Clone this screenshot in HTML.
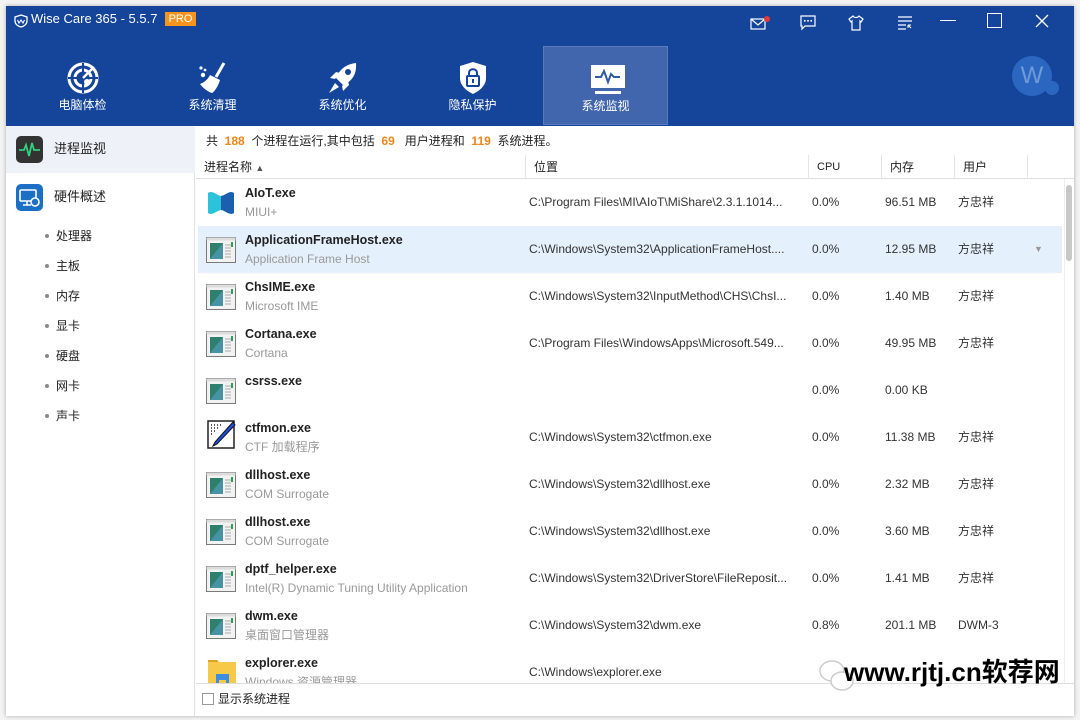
<!DOCTYPE html>
<html><head><meta charset="utf-8"><style>
*{margin:0;padding:0;box-sizing:border-box}
body{width:1080px;height:720px;background:#f3f3f3;position:relative;overflow:hidden;font-family:"Liberation Sans","Noto Sans CJK SC",sans-serif;font-size:12px;line-height:16px;color:#222}
.a{position:absolute;white-space:nowrap}
#win{position:absolute;left:6px;top:6px;width:1068px;height:710px;background:#fff;box-shadow:0 0 4px rgba(0,0,0,.3)}
#hdr{position:absolute;left:0;top:0;width:1068px;height:120px;background:#15449b;color:#fff}
.tab{position:absolute;top:40px;width:125px;height:79px;text-align:center}
.tab .lbl{position:absolute;left:0;right:0;top:51px;font-size:12px}
.tab svg{position:absolute;left:46px;top:15px}
.row{position:absolute;left:192px;width:864px;height:47px}
.row .n{position:absolute;left:47px;top:6px;font-weight:bold;font-size:12.5px;color:#222}
.row .d{position:absolute;left:47px;top:25px;font-size:12px;color:#999}
.row .p{position:absolute;left:331px;top:15px;font-size:12px;color:#333}
.row .c{position:absolute;left:614px;top:15px;color:#333}
.row .m{position:absolute;left:687px;top:15px;color:#333}
.row .u{position:absolute;left:760px;top:15px;color:#333}
.row .ic{position:absolute;left:9px;top:11px}
.sub{position:absolute;left:50px;font-size:12px;color:#222}
.sub:before{content:"";position:absolute;left:-11px;top:6px;width:4px;height:4px;border-radius:50%;background:#888}
</style></head><body>
<div id="win">
<div id="hdr">
 <svg class="a" style="left:8px;top:8px" width="14" height="14" viewBox="0 0 14 14"><path d="M7 1 L13 3 V7 C13 10 10 12.5 7 13 C4 12.5 1 10 1 7 V3Z" fill="none" stroke="#fff" stroke-width="1.3"/><path d="M3.5 6 L5 9 L7 6 L9 9 L10.5 6" fill="none" stroke="#fff" stroke-width="1.1"/></svg>
 <div class="a" style="left:25px;top:5px;font-size:13px">Wise Care 365 - 5.5.7</div>
 <div class="a" style="left:159px;top:6px;width:31px;height:14px;background:#f7941d;font-size:11px;text-align:center;line-height:14px">PRO</div>
 <svg class="a" style="left:744px;top:8px" width="22" height="18"><rect x="1" y="5" width="14" height="10" fill="none" stroke="#fff" stroke-width="1.2"/><path d="M1 5 L8 11 L15 5" fill="none" stroke="#fff" stroke-width="1.2"/><circle cx="17" cy="5" r="3" fill="#e23a3a"/></svg>
 <svg class="a" style="left:793px;top:8px" width="18" height="18"><path d="M2 2 H16 V12 H6 L3 15 V12 H2Z" fill="none" stroke="#fff" stroke-width="1.2"/><rect x="5" y="6" width="1.6" height="1.6" fill="#fff"/><rect x="8.2" y="6" width="1.6" height="1.6" fill="#fff"/><rect x="11.4" y="6" width="1.6" height="1.6" fill="#fff"/></svg>
 <svg class="a" style="left:841px;top:8px" width="18" height="18"><path d="M6 2 L2 5 L4 8 L5 7 V16 H13 V7 L14 8 L16 5 L12 2 C11 4 7 4 6 2Z" fill="none" stroke="#fff" stroke-width="1.2"/></svg>
 <svg class="a" style="left:890px;top:8px" width="18" height="18"><path d="M2 3H16M2 7H16M2 11H10M2 15H10" stroke="#fff" stroke-width="1.2"/><path d="M12 11 L15 14 M12 11 V14 M12 11 H15" stroke="#fff" stroke-width="1"/></svg>
 <div class="a" style="left:934px;top:14px;width:16px;height:1px;background:#fff"></div>
 <div class="a" style="left:981px;top:7px;width:15px;height:15px;border:1.3px solid #fff"></div>
 <svg class="a" style="left:1028px;top:7px" width="16" height="16"><path d="M2 2L14 14M14 2L2 14" stroke="#fff" stroke-width="1.3"/></svg>
 <div class="tab" style="left:14px"><svg width="34" height="34" viewBox="0 0 34 34"><circle cx="17" cy="17" r="14" fill="none" stroke="#fff" stroke-width="3"/><circle cx="17" cy="17" r="8" fill="none" stroke="#fff" stroke-width="3"/><path d="M17 2V32M2 17H32" stroke="#15449b" stroke-width="2"/><path d="M17 17 L28 6" stroke="#fff" stroke-width="2.5"/><circle cx="21" cy="21" r="3" fill="#fff"/></svg><div class="lbl">电脑体检</div></div>
 <div class="tab" style="left:144px"><svg width="34" height="34" viewBox="0 0 34 34"><path d="M28 2 L20 16" stroke="#fff" stroke-width="3"/><path d="M14 14 L24 19 C22 26 18 31 16 32 C12 31 7 27 4 23 C9 21 12 18 14 14Z" fill="#fff"/><circle cx="5" cy="7" r="1.6" fill="#fff"/><circle cx="9" cy="9" r="1.4" fill="#fff"/><circle cx="7" cy="14" r="2.2" fill="#fff"/></svg><div class="lbl">系统清理</div></div>
 <div class="tab" style="left:274px"><svg width="34" height="34" viewBox="0 0 34 34"><path d="M30 2 C20 3 13 9 10 17 L17 24 C25 21 31 14 30 2Z" fill="#fff"/><circle cx="22" cy="11" r="3" fill="#15449b"/><path d="M9 18 L4 17 L10 11 L14 12Z M16 25 L17 30 L23 24 L22 20Z" fill="#fff"/><path d="M9 22 L3 32 L13 26Z" fill="#fff"/></svg><div class="lbl">系统优化</div></div>
 <div class="tab" style="left:404px"><svg width="34" height="34" viewBox="0 0 34 34"><path d="M17 1 L30 5 V17 C30 25 23 30 17 33 C11 30 4 25 4 17 V5Z" fill="#fff"/><rect x="11" y="15" width="12" height="10" rx="1" fill="none" stroke="#15449b" stroke-width="2"/><path d="M13 15 V12 C13 7 21 7 21 12 V15" fill="none" stroke="#15449b" stroke-width="2"/><path d="M17 18V22" stroke="#15449b" stroke-width="2"/></svg><div class="lbl">隐私保护</div></div>
 <div class="tab" style="left:537px;background:#4166ad;border:1px solid #5a7bbb"><svg width="36" height="34" viewBox="0 0 36 34"><rect x="1" y="3" width="34" height="23" fill="#fff"/><rect x="5" y="29" width="26" height="3" fill="#fff"/><path d="M5 15 H11 L14 9 L18 20 L21 12 L24 15 H30" fill="none" stroke="#2e5aa6" stroke-width="2"/></svg><div class="lbl">系统监视</div></div>
 <div class="a" style="left:1006px;top:50px;width:40px;height:40px;border-radius:50%;background:#2b67c0;color:#6f9bd8;font-size:24px;text-align:center;line-height:40px">W</div>
 <div class="a" style="left:1039px;top:75px;width:14px;height:14px;border-radius:50%;background:#2b67c0"></div>
</div>
<!-- sidebar -->
<div class="a" style="left:0;top:120px;width:189px;height:590px;border-right:1px solid #e2e2e2"></div>
<div class="a" style="left:0;top:120px;width:189px;height:47px;background:#eef2f8"></div>
<svg class="a" style="left:10px;top:130px" width="27" height="27"><rect width="27" height="27" rx="5" fill="#333"/><path d="M3 14 H8 L10 9 L13 20 L16 7 L18 14 H24" fill="none" stroke="#31d07c" stroke-width="1.8"/></svg>
<div class="a" style="left:48px;top:135px;font-size:13px">进程监视</div>
<svg class="a" style="left:10px;top:178px" width="27" height="27"><rect width="27" height="27" rx="5" fill="#1b6fc4"/><rect x="4" y="6" width="16" height="11" rx="1" fill="none" stroke="#fff" stroke-width="1.6"/><path d="M7 21H15M11 17V21" stroke="#fff" stroke-width="1.6"/><circle cx="19" cy="18" r="4" fill="#1b6fc4" stroke="#fff" stroke-width="1.6"/></svg>
<div class="a" style="left:48px;top:183px;font-size:13px">硬件概述</div>
<div class="sub" style="top:222px">处理器</div>
<div class="sub" style="top:252px">主板</div>
<div class="sub" style="top:282px">内存</div>
<div class="sub" style="top:312px">显卡</div>
<div class="sub" style="top:342px">硬盘</div>
<div class="sub" style="top:372px">网卡</div>
<div class="sub" style="top:402px">声卡</div>
<!-- summary -->
<div class="a" style="left:200px;top:127px;font-size:12px">共 <b style="color:#f08519;font-weight:bold">&nbsp;188&nbsp;</b>&nbsp;个进程在运行,其中包括 <b style="color:#f08519">&nbsp;69&nbsp;</b>&nbsp;&nbsp;用户进程和 <b style="color:#f08519">&nbsp;119&nbsp;</b>&nbsp;系统进程。</div>
<!-- header -->
<div class="a" style="left:190px;top:149px;width:878px;height:24px;border-bottom:1px solid #ddd"></div>
<div class="a" style="left:198px;top:153px">进程名称 <span style="font-size:9px;color:#555">▲</span></div>
<div class="a" style="left:528px;top:153px">位置</div>
<div class="a" style="left:811px;top:153px;font-size:11px">CPU</div>
<div class="a" style="left:884px;top:153px">内存</div>
<div class="a" style="left:957px;top:153px">用户</div>
<div class="a" style="left:519px;top:149px;width:1px;height:23px;background:#e4e4e4"></div>
<div class="a" style="left:802px;top:149px;width:1px;height:23px;background:#e4e4e4"></div>
<div class="a" style="left:875px;top:149px;width:1px;height:23px;background:#e4e4e4"></div>
<div class="a" style="left:948px;top:149px;width:1px;height:23px;background:#e4e4e4"></div>
<div class="a" style="left:1021px;top:149px;width:1px;height:23px;background:#e4e4e4"></div>
<!-- scrollbar -->
<div class="a" style="left:1058px;top:173px;width:10px;height:505px;background:#fff;border-left:1px solid #eee"></div>
<div class="a" style="left:1060px;top:179px;width:6px;height:76px;border-radius:3px;background:#c8c8c8"></div>
<!-- rows -->
<div class="row" style="top:173px"><svg class="ic" width="28" height="26"><path d="M1 3 C6 0 10 6 14 6 C18 6 22 0 27 3 V23 C22 26 18 20 14 20 C10 20 6 26 1 23Z" fill="#1f9ed8"/><path d="M1 3 C6 0 10 6 14 6 V20 C10 20 6 26 1 23Z" fill="#2ac3d9"/><path d="M14 6 C18 6 22 0 27 3 V23 C22 26 18 20 14 20Z" fill="#1a5fb0"/></svg><div class="n">AIoT.exe</div><div class="d">MIUI+</div><div class="p">C:\Program Files\MI\AIoT\MiShare\2.3.1.1014...</div><div class="c">0.0%</div><div class="m">96.51 MB</div><div class="u">方忠祥</div></div>
<div class="row" style="top:220px;background:#e5f0fd"><div class="n">ApplicationFrameHost.exe</div><div class="d">Application Frame Host</div><div class="p">C:\Windows\System32\ApplicationFrameHost....</div><div class="c">0.0%</div><div class="m">12.95 MB</div><div class="u">方忠祥</div><div class="a" style="left:836px;top:15px;font-size:9px;color:#999">▼</div></div>
<div class="row" style="top:267px"><div class="n">ChsIME.exe</div><div class="d">Microsoft IME</div><div class="p">C:\Windows\System32\InputMethod\CHS\ChsI...</div><div class="c">0.0%</div><div class="m">1.40 MB</div><div class="u">方忠祥</div></div>
<div class="row" style="top:314px"><div class="n">Cortana.exe</div><div class="d">Cortana</div><div class="p">C:\Program Files\WindowsApps\Microsoft.549...</div><div class="c">0.0%</div><div class="m">49.95 MB</div><div class="u">方忠祥</div></div>
<div class="row" style="top:361px"><div class="n">csrss.exe</div><div class="c">0.0%</div><div class="m">0.00 KB</div></div>
<div class="row" style="top:408px"><svg class="ic" width="30" height="30" style="top:6px"><rect x="1" y="1" width="26" height="27" fill="#fff" stroke="#222" stroke-width="1.5"/><path d="M4 5h1M7 5h1M10 5h1M13 5h1M4 8h1M7 8h1M10 8h1M4 11h1M7 11h1M4 14h1" stroke="#222" stroke-width="1.5"/><path d="M26 2 L8 22 L6 26 L10 24 L28 5Z" fill="#1e4fe0" stroke="#111"/></svg><div class="n">ctfmon.exe</div><div class="d">CTF 加载程序</div><div class="p">C:\Windows\System32\ctfmon.exe</div><div class="c">0.0%</div><div class="m">11.38 MB</div><div class="u">方忠祥</div></div>
<div class="row" style="top:455px"><div class="n">dllhost.exe</div><div class="d">COM Surrogate</div><div class="p">C:\Windows\System32\dllhost.exe</div><div class="c">0.0%</div><div class="m">2.32 MB</div><div class="u">方忠祥</div></div>
<div class="row" style="top:502px"><div class="n">dllhost.exe</div><div class="d">COM Surrogate</div><div class="p">C:\Windows\System32\dllhost.exe</div><div class="c">0.0%</div><div class="m">3.60 MB</div><div class="u">方忠祥</div></div>
<div class="row" style="top:549px"><div class="n">dptf_helper.exe</div><div class="d">Intel(R) Dynamic Tuning Utility Application</div><div class="p">C:\Windows\System32\DriverStore\FileReposit...</div><div class="c">0.0%</div><div class="m">1.41 MB</div><div class="u">方忠祥</div></div>
<div class="row" style="top:596px"><div class="n">dwm.exe</div><div class="d">桌面窗口管理器</div><div class="p">C:\Windows\System32\dwm.exe</div><div class="c">0.8%</div><div class="m">201.1 MB</div><div class="u">DWM-3</div></div>
<div class="row" style="top:643px;height:34px;overflow:hidden"><svg class="ic" width="30" height="30" style="top:9px"><path d="M1 2 H10 L12 4 H1Z" fill="#e0a21a"/><rect x="1" y="4" width="28" height="26" fill="#f7c948"/><rect x="9" y="16" width="13" height="14" fill="#3d8de0"/><rect x="12" y="22" width="7" height="8" fill="#f7c948"/></svg><div class="n">explorer.exe</div><div class="d">Windows 资源管理器</div><div class="p">C:\Windows\explorer.exe</div></div>
<svg width="0" height="0" style="position:absolute"><defs><g id="g"><rect x="0.5" y="0.5" width="29" height="25" fill="#f2f2f2" stroke="#7a7a7a"/><rect x="0.5" y="0.5" width="29" height="3" fill="#dcdcdc"/><rect x="4" y="6" width="13" height="16" fill="#2e7f6c"/><path d="M4 22 L17 6 V22Z" fill="#5aa0c8" opacity=".6"/><path d="M19 8h6M19 11h6M19 14h6M19 17h6M19 20h6" stroke="#aaa"/><rect x="25" y="5" width="2" height="5" fill="#2aa050"/></g></defs></svg>
<svg class="a" style="left:200px;top:231px" width="31" height="27"><use href="#g"/></svg>
<svg class="a" style="left:200px;top:278px" width="31" height="27"><use href="#g"/></svg>
<svg class="a" style="left:200px;top:325px" width="31" height="27"><use href="#g"/></svg>
<svg class="a" style="left:200px;top:372px" width="31" height="27"><use href="#g"/></svg>
<svg class="a" style="left:200px;top:466px" width="31" height="27"><use href="#g"/></svg>
<svg class="a" style="left:200px;top:513px" width="31" height="27"><use href="#g"/></svg>
<svg class="a" style="left:200px;top:560px" width="31" height="27"><use href="#g"/></svg>
<svg class="a" style="left:200px;top:607px" width="31" height="27"><use href="#g"/></svg>
<!-- footer -->
<div class="a" style="left:190px;top:677px;width:878px;height:1px;background:#ddd"></div>
<div class="a" style="left:196px;top:687px;width:12px;height:12px;border:1px solid #999;background:#fff"></div>
<div class="a" style="left:212px;top:685px;font-size:12px">显示系统进程</div>
<!-- watermark -->
<svg class="a" style="left:812px;top:651px" width="40" height="40"><ellipse cx="14" cy="14" rx="12" ry="10" fill="none" stroke="#ccc" stroke-width="1.5"/><ellipse cx="24" cy="24" rx="11" ry="9" fill="#fff" stroke="#ccc" stroke-width="1.5"/></svg>
<div class="a" style="left:838px;top:652px;font-size:26px;line-height:28px;font-weight:bold;color:#000">www.rjtj.cn软荐网</div>
</div>
</body></html>
